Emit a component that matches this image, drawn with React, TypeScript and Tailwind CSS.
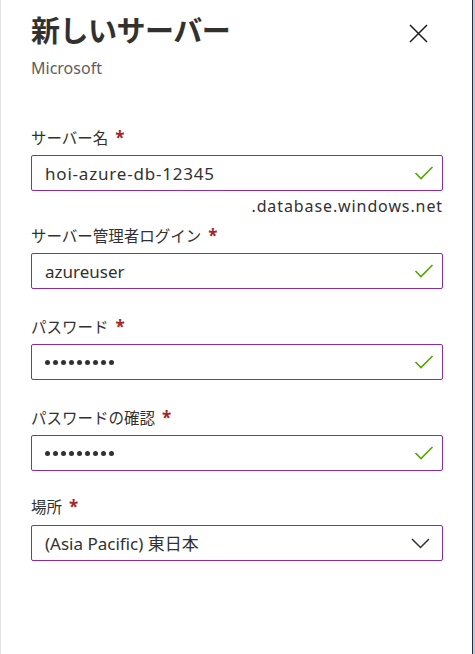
import React from "react";

const font = { fontFamily: '"Noto Sans", "Noto Sans CJK JP", sans-serif' };

function Check() {
  return (
    <svg width="20" height="14" viewBox="0 0 20 14" className="shrink-0">
      <path d="M1.5 7 L7 12.5 L18.5 1" fill="none" stroke="#57a300" strokeWidth="1.6" />
    </svg>
  );
}

function Chevron() {
  return (
    <svg width="19" height="11" viewBox="0 0 19 11" className="shrink-0">
      <path d="M1 1 L9.5 9.5 L18 1" fill="none" stroke="#323130" strokeWidth="1.5" />
    </svg>
  );
}

function Label({ text }: { text: string }) {
  return (
    <div className="h-[24px] leading-[24px] text-[15.5px] text-[#323130] flex items-center pt-[3px]">
      <span>{text}</span>
      <span className="ml-[7px] text-[#a4262c] text-[17px] font-bold">*</span>
    </div>
  );
}

function Dots() {
  return (
    <div className="flex gap-[3px] items-center">
      {Array.from({ length: 9 }).map((_, i) => (
        <div key={i} className="w-[5px] h-[5px] rounded-full bg-[#323130]" />
      ))}
    </div>
  );
}

function Box({ children, icon }: { children: React.ReactNode; icon: React.ReactNode }) {
  return (
    <div className="mt-[7px] h-[36px] w-[412px] border border-[#8a2da5] rounded-[2px] flex items-center justify-between pl-[13px] pr-[8px]">
      <div className="text-[17px] text-[#323130] leading-none">{children}</div>
      {icon}
    </div>
  );
}

export default function App() {
  return (
    <div className="h-screen w-[475px] flex bg-white overflow-hidden" style={font}>
      <div className="w-px bg-[#e3e3e3] shrink-0" />
      <div className="w-[471px] shrink-0 flex flex-col pl-[30px]">
        <div className="flex items-start justify-between w-[412px] mt-[11px]">
          <div>
            <div className="h-[40px] leading-[40px] text-[29px] font-semibold text-[#323130] tracking-[-0.5px]">
              新しいサーバー
            </div>
            <div className="mt-[7px] h-[20px] leading-[20px] text-[16px] text-[#605e5c]">Microsoft</div>
          </div>
          <svg width="19" height="19" viewBox="0 0 19 19" className="mt-[13px] mr-[15px]">
            <path d="M1 1 L18 18 M18 1 L1 18" stroke="#1b1b1b" strokeWidth="1.5" />
          </svg>
        </div>

        <div className="mt-[46px]">
          <Label text="サーバー名" />
          <Box icon={<Check />}>
            <span className="tracking-[0.8px]">hoi-azure-db-12345</span>
          </Box>
          <div className="mt-[5px] w-[412px] text-right h-[20px] leading-[20px] text-[16px] text-[#323130] tracking-[0.9px]">
            .database.windows.net
          </div>
        </div>

        <div className="mt-[6px]">
          <Label text="サーバー管理者ログイン" />
          <Box icon={<Check />}>azureuser</Box>
        </div>

        <div className="mt-[24px]">
          <Label text="パスワード" />
          <Box icon={<Check />}>
            <Dots />
          </Box>
        </div>

        <div className="mt-[24px]">
          <Label text="パスワードの確認" />
          <Box icon={<Check />}>
            <Dots />
          </Box>
        </div>

        <div className="mt-[22px]">
          <Label text="場所" />
          <div className="mt-[8px] h-[36px] w-[412px] border border-[#8a2da5] rounded-[2px] flex items-center justify-between pl-[13px] pr-[12px]">
            <div className="text-[17px] text-[#323130] leading-none">(Asia Pacific) 東日本</div>
            <Chevron />
          </div>
        </div>
      </div>
      <div className="w-px bg-[#1f2d4a] shrink-0" />
      <div className="w-[2px] bg-[#c8c8c8] shrink-0" />
    </div>
  );
}
